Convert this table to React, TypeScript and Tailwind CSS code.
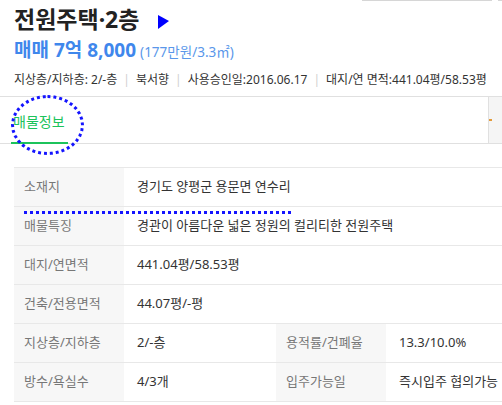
const font = { fontFamily: '"Noto Sans", "Noto Sans CJK KR", sans-serif' };

function Sep() {
    return <span className="mx-[6px] text-[#cfcfcf]">|</span>;
}

function Row({label, value}: { label: string, value: string }) {
    return (
        <div className="grid grid-cols-[110px_1fr] h-[39px] border-b border-[#e8e8e8]">
            <div className="bg-[#f7f7f7] text-[#777] pl-[10px] flex items-center">{label}</div>
            <div className="text-[#333] pl-[13px] flex items-center whitespace-nowrap">{value}</div>
        </div>
    );
}

function Row4({a, b, c, d}: { a: string, b: string, c: string, d: string }) {
    return (
        <div className="grid grid-cols-[110px_152px_110px_1fr] h-[39px] border-b border-[#e8e8e8]">
            <div className="bg-[#f7f7f7] text-[#777] pl-[10px] flex items-center">{a}</div>
            <div className="text-[#333] pl-[13px] flex items-center">{b}</div>
            <div className="bg-[#f7f7f7] text-[#777] pl-[10px] flex items-center">{c}</div>
            <div className="text-[#333] pl-[13px] flex items-center whitespace-nowrap">{d}</div>
        </div>
    );
}

export default function App() {
    return (
        <div className="relative w-[502px] h-[405px] overflow-hidden bg-white" style={font}>
            <div className="flex h-px">
                <div className="ml-[362px] w-[130px] bg-[#d6d6d6]"></div>
                <div className="ml-[6px] grow bg-[#d6d6d6]"></div>
            </div>

            <div className="px-[14px]">
                <div className="flex items-center mt-[4px] h-[28px]">
                    <div className="text-[23px] font-bold text-[#222] leading-[28px]">전원주택·2층</div>
                    <svg className="ml-[19px] mt-[6px]" width="11" height="14" viewBox="0 0 11 14">
                        <polygon points="0,0 11,6 0,14" fill="#0000ff"/>
                    </svg>
                </div>
                <div className="flex items-baseline mt-[5px] h-[24px]">
                    <span className="text-[19px] font-bold text-[#3f87ec] leading-[24px]">매매 7억 8,000</span>
                    <span className="ml-[4px] text-[13.5px] text-[#5a97ea]">(177만원/3.3㎡)</span>
                </div>
                <div className="mt-[8px] text-[12px] text-[#333] leading-[20px] whitespace-nowrap">
                    지상층/지하층: 2/-층<Sep/>북서향<Sep/>사용승인일:2016.06.17<Sep/>대지/연 면적:441.04평/58.53평
                </div>
            </div>

            <div className="mt-[6px] flex h-[48px] border-t border-b border-[#e0e0e0]">
                <div className="ml-[11px] w-[57px] flex items-center text-[14px] text-[#1cc35b] border-b-2 border-[#1cc35b] -mb-px pl-[2px] pt-[3px]">매물정보</div>
                <div className="grow"></div>
                <div className="w-[14px] border-l border-[#e0e0e0] bg-[#f5f5f5] flex items-center">
                    <div className="w-[3px] h-[2px] bg-[#e39a3a]"></div>
                </div>
            </div>

            <div className="ml-[14px] mt-[23px] border-t border-[#e8e8e8] text-[13px]">
                <Row label="소재지" value="경기도 양평군 용문면 연수리"/>
                <Row label="매물특징" value="경관이 아름다운 넓은 정원의 컬리티한 전원주택"/>
                <Row label="대지/연면적" value="441.04평/58.53평"/>
                <Row label="건축/전용면적" value="44.07평/-평"/>
                <Row4 a="지상층/지하층" b="2/-층" c="용적률/건폐율" d="13.3/10.0%"/>
                <Row4 a="방수/욕실수" b="4/3개" c="입주가능일" d="즉시입주 협의가능"/>
            </div>

            <div className="absolute left-[11px] top-[95px] w-[73px] h-[60px] rounded-[50%] border-[3px] border-dotted border-[#1414ff]"></div>
            <div className="absolute left-[24px] top-[211px] w-[267px] border-t-[3px] border-dotted border-[#1414ff]"></div>
        </div>
    );
}
